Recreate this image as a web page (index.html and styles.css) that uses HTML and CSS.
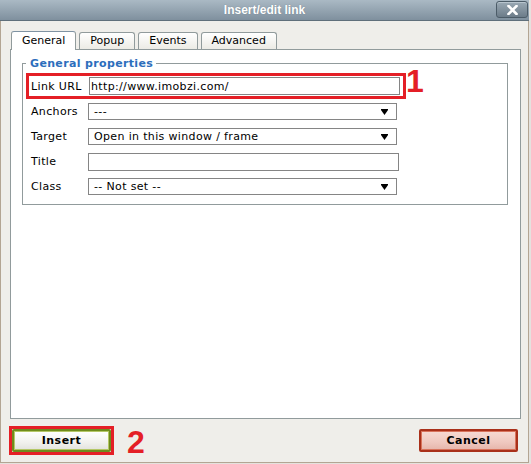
FILE: index.html
```html
<!DOCTYPE html>
<html lang="en">
<head>
  <meta charset="UTF-8">
  <title>Insert/edit link</title>
  <link rel="stylesheet" href="styles.css">
</head>
<body>

  <div class="window">
    <div class="titlebar">
      <span class="title">Insert/edit link</span>
      <button class="close" title="Close">
        <svg width="11" height="10" viewBox="0 0 11 10">
          <path d="M1.5 1 L9.5 9 M9.5 1 L1.5 9" stroke="#fff" stroke-width="2.6" stroke-linecap="square"/>
        </svg>
      </button>
    </div>

    <div class="content">
      <div class="tabs">
        <span class="tab active">General</span>
        <span class="tab">Popup</span>
        <span class="tab">Events</span>
        <span class="tab">Advanced</span>
      </div>

      <div class="panel">
        <fieldset>
          <legend>General properties</legend>

          <div class="marked-line">
            <div class="row marked">
              <label class="label">Link URL</label>
              <input class="field" type="text" value="http://www.imobzi.com/">
            </div>
            <span class="callout">1</span>
          </div>

          <div class="row">
            <label class="label">Anchors</label>
            <div class="select"><span>---</span><svg class="arrow" width="7" height="6" viewBox="0 0 7 6"><path d="M0 0 H7 V1 L3.5 6 L0 1 Z" fill="#000"/></svg></div>
          </div>
          <div class="row">
            <label class="label">Target</label>
            <div class="select"><span>Open in this window / frame</span><svg class="arrow" width="7" height="6" viewBox="0 0 7 6"><path d="M0 0 H7 V1 L3.5 6 L0 1 Z" fill="#000"/></svg></div>
          </div>
          <div class="row">
            <label class="label">Title</label>
            <input class="field" type="text" value="">
          </div>
          <div class="row">
            <label class="label">Class</label>
            <div class="select"><span>-- Not set --</span><svg class="arrow" width="7" height="6" viewBox="0 0 7 6"><path d="M0 0 H7 V1 L3.5 6 L0 1 Z" fill="#000"/></svg></div>
          </div>
        </fieldset>
      </div>

      <div class="footer">
        <div class="insert-group">
          <div class="marked-btn">
            <button class="btn btn-insert">Insert</button>
          </div>
          <span class="callout callout-2">2</span>
        </div>
        <button class="btn btn-cancel">Cancel</button>
      </div>
    </div>
  </div>

</body>
</html>
```

FILE: styles.css
```css
body {
  margin: 0;
  background-color: #e4e2de;
  font-family: "DejaVu Sans", Verdana, sans-serif;
  font-size: 11px;
  letter-spacing: 0.35px;
  color: #000;
}
.window {
  width: 529px;
  height: 463px;
  display: flex;
  flex-direction: column;
}

/* title bar */
.titlebar {
  height: 20px;
  border-bottom: 1px solid #5f6f7b;
  background: linear-gradient(#aab9c4, #7f909e);
  display: grid;
  grid-template-columns: 1fr auto 1fr;
  align-items: start;
}
.title {
  grid-column: 2;
  font: bold 12px "Liberation Sans", Arial, sans-serif;
  letter-spacing: 0;
  line-height: 20px;
  color: #fff;
  text-shadow: 0 0 1px #6c7c88;
}
.close {
  grid-column: 3;
  justify-self: end;
  margin: 1px 1px 0 0;
  width: 32px;
  height: 17px;
  padding: 0;
  border: 1px solid #4c5c68;
  border-radius: 3px;
  background: linear-gradient(#9aa9b4, #6c7c89);
  box-shadow: inset 0 1px 0 #b8c5ce;
  display: flex;
  align-items: center;
  justify-content: center;
}

/* dialog body */
.content {
  flex: 1;
  background-color: #efeeea;
  border: 1px solid #b3a593;
  border-top: none;
  padding: 10px 7px 0 9px;
  display: flex;
  flex-direction: column;
}
.tabs {
  display: flex;
  align-items: flex-end;
  gap: 3px;
  height: 18px;
  padding-left: 1px;
}
.tab {
  height: 17px;
  box-sizing: border-box;
  padding: 0 10px;
  line-height: 16px;
  letter-spacing: 0;
  border: 1px solid #919b9c;
  border-bottom: none;
  border-radius: 3px 3px 0 0;
  background: linear-gradient(#ffffff, #ecebe5);
}
.tab.active {
  height: 19px;
  margin-bottom: -1px;
  line-height: 18px;
  background: #fff;
  border-top-color: #7f93a3;
  position: relative;
  z-index: 1;
}
.panel {
  height: 370px;
  box-sizing: border-box;
  border: 1px solid #919b9c;
  background: #fff;
  padding: 0 12px 0 11px;
}
fieldset {
  margin: 7px 0 0;
  padding: 3px 0 5px 3px;
  border: 1px solid #919b9c;
}
legend {
  padding: 0 3px 0 4px;
  line-height: 13px;
  font-weight: bold;
  color: #2c6ebc;
}

/* form rows */
.marked-line {
  display: flex;
  align-items: flex-start;
}
.row {
  display: flex;
  align-items: center;
  height: 25px;
  padding-left: 5px;
}
.row.marked {
  width: 380px;
  height: 26px;
  box-sizing: border-box;
  border: 3px solid #e41f26;
  padding-left: 2px;
}
.label {
  width: 57px;
}
.marked .label {
  width: 58px;
}
.field {
  width: 311px;
  height: 18px;
  box-sizing: border-box;
  margin: 0;
  padding: 0 1px;
  border: 1px solid #858585;
  font: 11px "DejaVu Sans", Verdana, sans-serif;
  letter-spacing: 0.35px;
  color: #000;
}
.select {
  width: 309px;
  height: 17px;
  box-sizing: border-box;
  padding: 0 8px 0 5px;
  border: 1px solid #858585;
  display: flex;
  align-items: center;
  justify-content: space-between;
  background: #fff;
}
.callout {
  font: bold 32px "Liberation Sans", Arial, sans-serif;
  letter-spacing: 0;
  line-height: 32px;
  color: #e41f26;
}
.marked-line .callout {
  margin-top: -8px;
}

/* buttons */
.footer {
  display: flex;
  justify-content: space-between;
  align-items: flex-start;
  padding-top: 7px;
}
.insert-group {
  display: flex;
  align-items: flex-start;
  margin-left: -1px;
}
.marked-btn {
  border: 3px solid #e41f26;
  display: flex;
}
.callout-2 {
  margin-left: 13px;
}
.btn {
  width: 99px;
  height: 23px;
  margin: 0;
  padding: 0;
  border-radius: 2px;
  font: bold 11px "DejaVu Sans", Verdana, sans-serif;
  letter-spacing: 0.5px;
  color: #000;
}
.btn-insert {
  border: 2px solid #6f8b1d;
  box-shadow: inset 0 0 0 1px #b4c766;
  background: linear-gradient(#ffffff, #f1f1ee 60%, #e2e2dc);
}
.btn-cancel {
  margin: 3px 3px 0 0;
  border: 2px solid #a9301a;
  box-shadow: inset 0 0 0 1px #d8735c;
  background: linear-gradient(#f7dad3, #efc8bf 60%, #e6b5aa);
}
```
